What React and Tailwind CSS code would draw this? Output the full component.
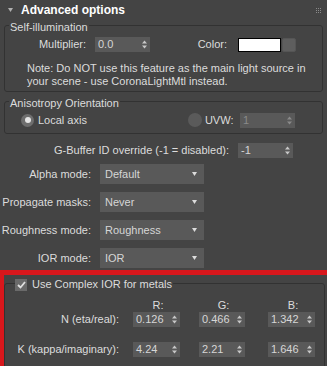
const font = { fontFamily: "'Liberation Sans', Arial, sans-serif" };

function Arrows({ color = "#c8c8c8" }) {
    return (
        <svg width="5" height="9" viewBox="0 0 5 9" className="shrink-0">
            <path d="M0 3.5 L2.5 0.5 L5 3.5 Z" fill={color} />
            <path d="M0 5.5 L2.5 8.5 L5 5.5 Z" fill={color} />
        </svg>
    )
}

function Spinner({ value, w, disabled }) {
    return (
        <div className={`flex items-center justify-between h-[15px] bg-[#595959] pl-[3px] pr-[3px] ${w}`}>
            <span className={`leading-[15px] ${disabled ? "text-[#8a8a8a]" : "text-[#d6d6d6]"}`}>{value}</span>
            <Arrows color={disabled ? "#8a8a8a" : "#c8c8c8"} />
        </div>
    )
}

function Dropdown({ label, value }) {
    return (
        <div className="flex items-center h-[20px]">
            <span className="w-[92px] text-right pr-[1px]">{label}</span>
            <div className="ml-[8px] w-[104px] h-[20px] bg-[#595959] flex items-center justify-between pl-[5px] pr-[7px]">
                <span className="text-[#d6d6d6]">{value}</span>
                <svg width="5" height="4" viewBox="0 0 5 4"><path d="M0 0 L5 0 L2.5 4 Z" fill="#dcdcdc" /></svg>
            </div>
        </div>
    )
}

export default function App() {
    return (
        <div className="w-[327px] h-[366px] bg-[#444444] overflow-hidden text-[11px] text-[#dcdcdc] leading-[13px]" style={font}>
            {/* rollout header */}
            <div className="flex items-center h-[20px] pl-[8px] pr-[6px]">
                <svg width="5" height="4" viewBox="0 0 5 4"><path d="M0 0 L5 0 L2.5 4 Z" fill="#b0b0b0" /></svg>
                <span className="ml-[8px] font-bold text-white text-[12px]">Advanced options</span>
                <div className="flex-1" />
                <svg width="5" height="5" viewBox="0 0 5 5">
                    {[0, 2, 4].map(y => [0, 2, 4].map(x => <rect key={`${x}${y}`} x={x} y={y} width="1" height="1" fill="#8a8a8a" />))}
                </svg>
            </div>

            {/* Self-illumination */}
            <div className="mx-[4px] mt-[5px] h-[67px] border border-[#323232] rounded-[3px]">
                <div className="-mt-[5px] ml-[4px] w-fit px-[1px] bg-[#444444] leading-[12px]">Self-illumination</div>
                <div className="flex items-center mt-[4px] h-[15px]">
                    <span className="w-[81px] text-right">Multiplier:</span>
                    <div className="ml-[9px]"><Spinner value="0.0" w="w-[55px]" /></div>
                    <span className="w-[77px] text-right">Color:</span>
                    <div className="ml-[11px] w-[43px] h-[14px] bg-white border border-black" />
                    <div className="ml-[1px] w-[14px] h-[14px] bg-[#5e5e5e] rounded-[2px] border border-[#555]" />
                </div>
                <p className="mt-[10px] pl-[22px] leading-[13px]">
                    Note: Do NOT use this feature as the main light source in<br />
                    your scene - use CoronaLightMtl instead.
                </p>
            </div>

            {/* Anisotropy */}
            <div className="mx-[4px] mt-[9px] h-[33px] border border-[#323232] rounded-[3px]">
                <div className="-mt-[5px] ml-[4px] w-fit px-[1px] bg-[#444444] leading-[12px]">Anisotropy Orientation</div>
                <div className="flex items-center mt-[4px] h-[14px]">
                    <div className="ml-[16px] w-[13px] h-[13px] rounded-full bg-[#6e6e6e] flex items-center justify-center">
                        <div className="w-[6px] h-[6px] rounded-full bg-[#e6e6e6]" />
                    </div>
                    <span className="ml-[4px]">Local axis</span>
                    <div className="ml-[101px] w-[14px] h-[14px] rounded-full bg-[#5a5a5a]" />
                    <span className="ml-[3px] w-[35px]">UVW:</span>
                    <Spinner value="1" w="w-[55px]" disabled />
                </div>
            </div>

            {/* G-Buffer */}
            <div className="flex items-center mt-[9px] h-[15px]">
                <span className="w-[229px] text-right">G-Buffer ID override (-1 = disabled):</span>
                <div className="ml-[9px]"><Spinner value="-1" w="w-[55px]" /></div>
            </div>

            <div className="mt-[6px] flex flex-col gap-[8px]">
                <Dropdown label="Alpha mode:" value="Default" />
                <Dropdown label="Propagate masks:" value="Never" />
                <Dropdown label="Roughness mode:" value="Roughness" />
                <Dropdown label="IOR mode:" value="IOR" />
            </div>

            {/* highlighted section */}
            <div className="mt-[2px] h-[120px] border-t-[5px] border-l-[4px] border-[#d8171c]">
                <div className="mt-[8px] mr-[2px] h-[100px] border border-[#323232] rounded-[3px]">
                    <div className="-mt-[6px] ml-[10px] w-fit flex items-center bg-[#444444] pr-[1px]">
                        <div className="w-[12px] h-[12px] bg-[#6a6a6a] flex items-center justify-center">
                            <svg width="9" height="8" viewBox="0 0 9 8"><path d="M1 4 L3.5 6.5 L8 1" stroke="#e0e0e0" strokeWidth="1.8" fill="none" /></svg>
                        </div>
                        <span className="ml-[5px]">Use Complex IOR for metals</span>
                    </div>
                    <div className="flex mt-[8px] h-[13px]">
                        <span className="w-[114px]" />
                        <span className="ml-[14px] w-[47px] text-center pl-[3px]">R:</span>
                        <span className="ml-[19px] w-[46px] text-center pl-[3px]">G:</span>
                        <span className="ml-[23px] w-[47px] text-center pl-[3px]">B:</span>
                    </div>
                    <div className="flex items-center h-[15px]">
                        <span className="w-[114px] text-right">N (eta/real):</span>
                        <div className="ml-[14px]"><Spinner value="0.126" w="w-[47px]" /></div>
                        <div className="ml-[19px]"><Spinner value="0.466" w="w-[46px]" /></div>
                        <div className="ml-[23px]"><Spinner value="1.342" w="w-[47px]" /></div>
                    </div>
                    <div className="flex items-center mt-[15px] h-[15px]">
                        <span className="w-[114px] text-right">K (kappa/imaginary):</span>
                        <div className="ml-[14px]"><Spinner value="4.24" w="w-[47px]" /></div>
                        <div className="ml-[19px]"><Spinner value="2.21" w="w-[46px]" /></div>
                        <div className="ml-[23px]"><Spinner value="1.646" w="w-[47px]" /></div>
                    </div>
                </div>
            </div>
        </div>
    )
}
